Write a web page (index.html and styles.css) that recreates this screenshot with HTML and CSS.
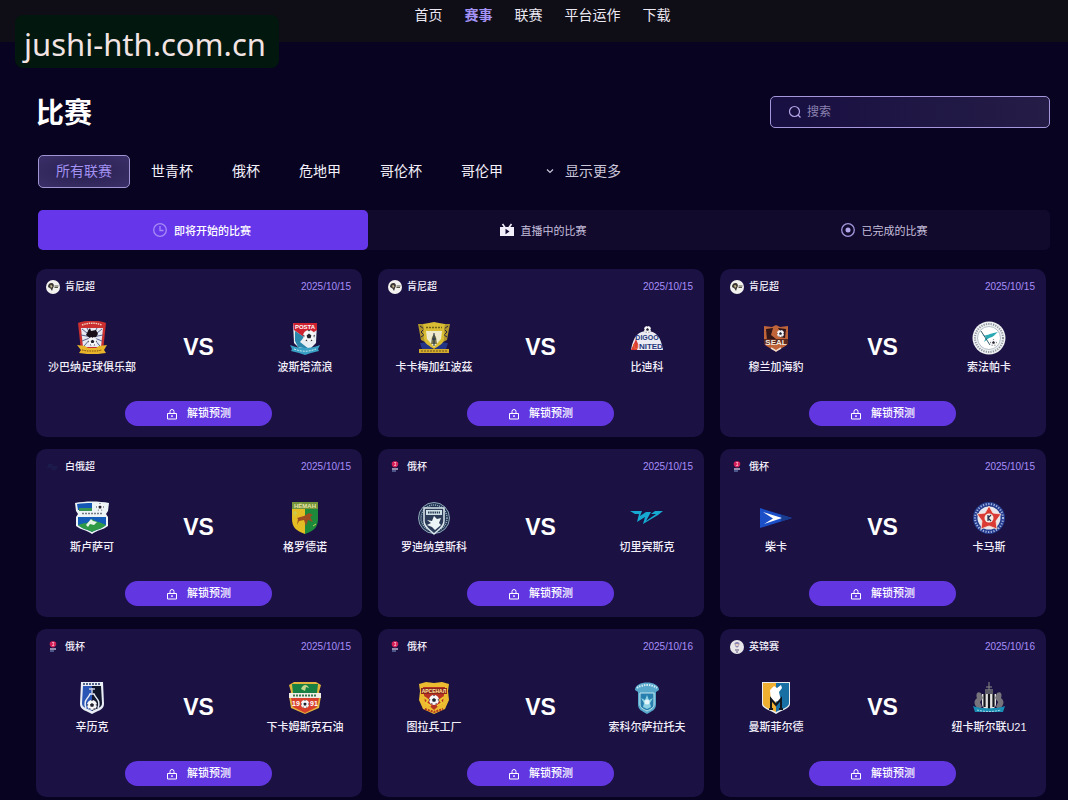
FILE: index.html
```html
<!DOCTYPE html>
<html lang="zh-CN">
<head>
    <meta charset="UTF-8">
    <meta name="viewport" content="width=device-width, initial-scale=1.0">
    <title>比赛</title>
    <link rel="stylesheet" href="styles.css">
</head>
<body>
    <!-- shared icons -->
    <svg class="sprite" aria-hidden="true">
        <symbol id="lock" viewBox="0 0 12 12">
            <path d="M1.500 5.500h9v5.500h-9zM4 5.500V3.500a2 2 0 0 1 4 0V5.500M6 7.500v1.500" fill="none" stroke="currentColor"/>
            <circle cx="6" cy="8" r="0.8" fill="currentColor"/>
        </symbol>
        <symbol id="ball" viewBox="0 0 10 10">
            <circle cx="5" cy="5" r="5" fill="#f6f6f8"/>
            <path d="M5 3l2 1.500-.7 2.300H3.700L3 4.500zM4 0h2L5 1.200zM0 4l1.300.6L.8 6.500zM10 4l-1.300.6.5 1.900zM2 8.800L3 8l.8 1.600zM8 8.800L7 8l-.8 1.600z" fill="#22222e"/>
        </symbol>
        <symbol id="kenya" viewBox="0 0 14 14">
            <circle cx="7" cy="7" r="7" fill="#f4f2ee"/>
            <path d="M2 7c0-3 2-4.500 4-4 2 .5 2.500 3 1 5L6 11 4.500 8.500z" fill="#3b3836"/>
            <path d="M4 5.500l1.500-.5 1 1.500-1.500 1.500z" fill="#c9b88a"/>
            <path d="M8.500 6h4M8.500 7.500h3.500" stroke="#554"/>
        </symbol>
        <symbol id="belarus" viewBox="0 0 14 14">
            <path d="M2 4h5l-1 2h6l-2 4H5l1-2H1z" fill="#1c1a4b"/>
        </symbol>
        <symbol id="russia" viewBox="0 0 14 14">
            <path d="M4 2.500C5 .8 9 .8 10 2.500S9.500 7.500 7 7.500 3 4.500 4 2.500z" fill="#d51f58"/>
            <path d="M6 2.500h2L7 4l1 1.500H6" stroke="#ffb4c8" fill="none" stroke-width="0.800"/>
            <path d="M4 9h6" stroke="#e9e3f3" stroke-width="1.200"/>
            <path d="M4 11h4" stroke="#7f9cd0"/>
        </symbol>
        <symbol id="england" viewBox="0 0 14 14">
            <circle cx="7" cy="7" r="7" fill="#e9e6ea"/>
            <path d="M4.500 3.500C5 1.500 9 1.500 9.500 3.500L9 6 7.500 7.500h-1L5 6z" fill="#8b86b4"/>
            <path d="M5.500 4h3v2h-3z" fill="#e8cfc0"/>
            <path d="M5 10h4M6 12h2" stroke="#5f577c"/>
        </symbol>
    </svg>

    <header class="header">
        <nav class="nav">
            <a href="#">首页</a>
            <a href="#" class="current">赛事</a>
            <a href="#">联赛</a>
            <a href="#">平台运作</a>
            <a href="#">下载</a>
        </nav>
    </header>
    <div class="site-badge">jushi-hth.com.cn</div>

    <main class="page">
        <div class="title-row">
            <h1>比赛</h1>
            <form class="search" role="search">
                <label for="search" aria-label="搜索">
                    <svg width="14" height="14" viewBox="0 0 14 14"><circle cx="6.500" cy="6.500" r="5" fill="none" stroke="currentColor" stroke-width="1.200"/><path d="M10 10l2.500 2.500" stroke="currentColor" stroke-width="1.200"/></svg>
                </label>
                <input type="search" id="search" placeholder="搜索">
            </form>
        </div>

        <div class="filters">
            <button type="button" class="filter active">所有联赛</button>
            <button type="button" class="filter">世青杯</button>
            <button type="button" class="filter">俄杯</button>
            <button type="button" class="filter">危地甲</button>
            <button type="button" class="filter">哥伦杯</button>
            <button type="button" class="filter">哥伦甲</button>
            <button type="button" class="filter more">
                <svg width="8" height="8" viewBox="0 0 8 8"><path d="M1 2.500l3 3 3-3" fill="none" stroke="currentColor" stroke-width="1.200"/></svg>
                显示更多
            </button>
        </div>

        <div class="tabs" role="tablist">
            <button type="button" class="tab active" role="tab" aria-selected="true">
                <svg width="14" height="14" viewBox="0 0 14 14"><circle cx="7" cy="7" r="6.300" fill="none" stroke="#a68bf6" stroke-width="1.300"/><path d="M7 3v4.500h3.500" fill="none" stroke="#a68bf6" stroke-width="1.300"/></svg>
                即将开始的比赛
            </button>
            <button type="button" class="tab" role="tab" aria-selected="false">
                <svg width="14" height="14" viewBox="0 0 14 14"><path d="M0 4h14v9H0z" fill="#f2effa"/><path d="M2.500 1l2.500 3.500M11.500 1L9 4.500" stroke="#f2effa" stroke-width="1.600"/><path d="M5.500 5.800l4 2.700-4 2.700z" fill="#130b33"/></svg>
                直播中的比赛
            </button>
            <button type="button" class="tab" role="tab" aria-selected="false">
                <svg width="14" height="14" viewBox="0 0 14 14"><circle cx="7" cy="7" r="6.300" fill="none" stroke="#a497dc" stroke-width="1.300"/><circle cx="7" cy="7" r="2.500" fill="#b3a6ea"/></svg>
                已完成的比赛
            </button>
        </div>

        <section class="matches">
            <article class="card">
                <div class="card-head">
                    <span class="league"><svg><use href="#kenya"/></svg>肯尼超</span>
                    <time datetime="2025-10-15">2025/10/15</time>
                </div>
                <div class="teams">
                    <div class="team">
                        <svg viewBox="0 0 34 34">
                            <path d="M3 2C10-1 24-1 31 2L28 30H6z" fill="#c9302f"/>
                            <path d="M6 7h22l-2 19H8z" fill="#e6e9f2"/>
                            <path d="M17 16L7 8M17 16L12 7M17 16L22 7M17 16L27 8M17 16L6 14M17 16L28 14M17 16L7 20M17 16L27 20M17 16L9 25M17 16L25 25" stroke="#59628c"/>
                            <path d="M7 4C14 1.500 20 1.500 27 4" stroke="#f3d0c0" stroke-dasharray="1.500 .8" fill="none" stroke-width="1.500"/>
                            <path d="M11 14l2-4 2-3 1 3 5-1 2 4-2 3-6 1z" fill="#180f18"/>
                            <use href="#ball" x="13" y="16" width="9" height="9"/>
                            <path d="M2 24l8 1 3 2h8l3-2 8-1-3 5 2 3-8 1H12l-8-1 2-3z" fill="#e8b42a"/>
                            <path d="M7 29l5 1h10l5-1" stroke="#7c4a12" fill="none" stroke-dasharray="1.500 1"/>
                        </svg>
                        <span>沙巴纳足球俱乐部</span>
                    </div>
                    <strong class="vs">VS</strong>
                    <div class="team">
                        <svg viewBox="0 0 34 34">
                            <path d="M5 2h24l-1 20-11 11L6 22z" fill="#e9eef2"/>
                            <path d="M5 2h24v7l-12 8L6 9z" fill="#cf2231"/>
                            <text x="17" y="8" class="crest-text" font-size="6" fill="#fff">POSTA</text>
                            <path d="M7 10l9 6-4 5 9 7-11-2-3-6z" fill="#2b86ac"/>
                            <use href="#ball" x="15" y="9" width="12" height="12"/>
                            <path d="M2 24c9 4 21 4 30 0l-2 4 1 2-8 2-6 2-6-2-8-2 1-2z" fill="#3a9fc4"/>
                            <path d="M6 28c8 3 14 3 22 0" stroke="#c4e9f0" stroke-dasharray="2 1" fill="none"/>
                        </svg>
                        <span>波斯塔流浪</span>
                    </div>
                </div>
                <button type="button" class="unlock"><svg><use href="#lock"/></svg><span>解锁预测</span></button>
            </article>

            <article class="card">
                <div class="card-head">
                    <span class="league"><svg><use href="#kenya"/></svg>肯尼超</span>
                    <time datetime="2025-10-15">2025/10/15</time>
                </div>
                <div class="teams">
                    <div class="team">
                        <svg viewBox="0 0 34 34">
                            <path d="M1 3h5l2 18-4-2zM33 3h-5l-2 18 4-2z" fill="#b0962a"/>
                            <path d="M3 5l4 3-3 3 3 3-3 2M31 5l-4 3 3 3-3 3 3 2" stroke="#2a233c" fill="none"/>
                            <path d="M3 22l8-1 5 7H5zM31 22l-8-1-5 7h11z" fill="#253585"/>
                            <path d="M6 3l6-1 5-1 5 1 6 1-1 15c0 5-6 7-10 10-4-3-10-5-10-10z" fill="#d8bd34"/>
                            <path d="M9 10h16l-1 8-7 8-7-8z" fill="#eeeacc"/>
                            <path d="M9 6.500h16" stroke="#71601a" stroke-width="1.500" stroke-dasharray="2 1"/>
                            <path d="M15 16l2-3 2 3 1 7h-6z" fill="#7b784e"/><path d="M17 12v13M15 18h4" stroke="#1c2c4a"/>
                            <path d="M2 28h30v4H2z" fill="#d1aa2e"/><path d="M4 30h26" stroke="#6f5417" stroke-dasharray="2 1"/>
                        </svg>
                        <span>卡卡梅加红波茲</span>
                    </div>
                    <strong class="vs">VS</strong>
                    <div class="team">
                        <svg viewBox="0 0 34 34">
                            <path d="M1 29C3 15 9 10 17 10s14 5 16 19z" fill="#ecebf3"/>
                            <use href="#ball" x="14" y="5" width="7" height="7"/>
                            <path d="M1 29l5-11 2 5-1 6z" fill="#dd3b35"/>
                            <text x="17" y="19" class="crest-text" font-size="7" fill="#26377c">DIGOO</text>
                            <text x="18" y="28" class="crest-text" font-size="8" fill="#26377c"><tspan fill="#e8632f">U</tspan>NITED</text>
                        </svg>
                        <span>比迪科</span>
                    </div>
                </div>
                <button type="button" class="unlock"><svg><use href="#lock"/></svg><span>解锁预测</span></button>
            </article>

            <article class="card">
                <div class="card-head">
                    <span class="league"><svg><use href="#kenya"/></svg>肯尼超</span>
                    <time datetime="2025-10-15">2025/10/15</time>
                </div>
                <div class="teams">
                    <div class="team">
                        <svg viewBox="0 0 34 34">
                            <path d="M5 5l8 1 4-2 4 2 8-1v16c0 5-7 5-12 10C12 26 5 26 5 21z" fill="#c0643a"/>
                            <path d="M7 8l7-1-2 7 5 4-9 1zM19 7l8 1-1 9-5-1 1-4z" fill="#301519"/>
                            <use href="#ball" x="18" y="9" width="7" height="7"/>
                            <path d="M5 18h24v5H5z" fill="#5e291f"/>
                            <text x="17" y="24" class="crest-text" font-size="8" fill="#f4e8df">SEAL</text>
                            <path d="M12 27l5 3 5-3" stroke="#f1dccd" fill="none" stroke-width="1.500"/>
                        </svg>
                        <span>穆兰加海豹</span>
                    </div>
                    <strong class="vs">VS</strong>
                    <div class="team">
                        <svg viewBox="0 0 34 34">
                            <circle cx="17" cy="17" r="16.500" fill="#eef0f2"/>
                            <circle cx="17" cy="17" r="14" fill="none" stroke="#8d949d" stroke-width="2" stroke-dasharray="1.200 1.200"/>
                            <circle cx="17" cy="17" r="11.500" fill="#fff" stroke="#93a5b0" stroke-width="0.700"/>
                            <path d="M9 14c5 2 9-2 17-3-3 2-4 5-9 6l-5 4 2-5z" fill="#2baab4"/>
                            <path d="M9 10l9 14" stroke="#315d6c"/>
                            <use href="#ball" x="18" y="18" width="7" height="7"/>
                        </svg>
                        <span>索法帕卡</span>
                    </div>
                </div>
                <button type="button" class="unlock"><svg><use href="#lock"/></svg><span>解锁预测</span></button>
            </article>

            <article class="card">
                <div class="card-head">
                    <span class="league"><svg><use href="#belarus"/></svg>白俄超</span>
                    <time datetime="2025-10-15">2025/10/15</time>
                </div>
                <div class="teams">
                    <div class="team">
                        <svg viewBox="0 0 34 34">
                            <path d="M0 2c10-2 24-2 34 0l-1 8-2 3 2 3v9c-5 4-11 4-16 8-5-4-11-4-16-8v-9l2-3-2-3z" fill="#eef3f5"/>
                            <path d="M2 3c5-1 10-1 15-1v7H3z" fill="#1557b5"/>
                            <path d="M4 7h13v3H4z" fill="#3a9650"/>
                            <use href="#ball" x="21" y="2" width="8" height="8"/>
                            <path d="M7 12.500h20" stroke="#777c86" stroke-width="1.500" stroke-dasharray="2 1"/>
                            <path d="M3 16h28v8c-4 4-9 4-14 7-5-3-10-3-14-7z" fill="#145db9"/>
                            <path d="M3 24c6-3 9 0 14-6 4 3 8 3 14 6-4 4-9 4-14 7-5-3-10-3-14-7z" fill="#2f9a45"/>
                            <path d="M11 24l5-6 2 2 4 1-3 3-4-1-2 3z" fill="#e9f4e8"/>
                        </svg>
                        <span>斯卢萨可</span>
                    </div>
                    <strong class="vs">VS</strong>
                    <div class="team">
                        <svg viewBox="0 0 34 34">
                            <path d="M4 1h13v32C8 30 4 26 4 18z" fill="#e3bd23"/>
                            <path d="M17 1h13v17c0 8-4 12-13 15z" fill="#1d8a3b"/>
                            <path d="M4 1h26v7H4z" fill="#73943b"/>
                            <text x="17" y="7" class="crest-text" font-size="6" fill="#e8e3a9">НЁМАН</text>
                            <path d="M9 17l7-2 5-3 4 2-3 2 3 5-5-2-2 6-2-6-5 1-2 4 1-6z" fill="#9d4b20"/>
                            <path d="M5 12h4M7 10v5M25 25l3-2" stroke="#c4cf5a"/>
                        </svg>
                        <span>格罗德诺</span>
                    </div>
                </div>
                <button type="button" class="unlock"><svg><use href="#lock"/></svg><span>解锁预测</span></button>
            </article>

            <article class="card">
                <div class="card-head">
                    <span class="league"><svg><use href="#russia"/></svg>俄杯</span>
                    <time datetime="2025-10-15">2025/10/15</time>
                </div>
                <div class="teams">
                    <div class="team">
                        <svg viewBox="0 0 34 34">
                            <circle cx="17" cy="17" r="15.500" fill="#223354" stroke="#8fa8b6"/>
                            <circle cx="17" cy="17" r="13" fill="none" stroke="#9db5c0" stroke-width="1.500" stroke-dasharray="1 1"/>
                            <path d="M7 7h20v13c0 6-5 8-10 13C12 28 7 26 7 20z" fill="#2c3c58" stroke="#dce8ed" stroke-width="1.500"/>
                            <path d="M9 9h16v5H9z" fill="#cfe0e7"/><path d="M11 11.500h12" stroke="#2a3b56" stroke-width="2" stroke-dasharray="1.500 .7"/>
                            <path d="M10 19l5 1 2-5 3 3 4-1-2 5 2 2-6 5-3-3-5-2 4-2z" fill="#edf4f6"/>
                        </svg>
                        <span>罗迪纳莫斯科</span>
                    </div>
                    <strong class="vs">VS</strong>
                    <div class="team">
                        <svg viewBox="0 0 34 34">
                            <path d="M0 10h12l-2 5 6-4h5l-5 9 10-7h-5l4-3h8l-5 4-15 9 2-7-8 5 2-8H5z" fill="#16aad2"/>
                        </svg>
                        <span>切里宾斯克</span>
                    </div>
                </div>
                <button type="button" class="unlock"><svg><use href="#lock"/></svg><span>解锁预测</span></button>
            </article>

            <article class="card">
                <div class="card-head">
                    <span class="league"><svg><use href="#russia"/></svg>俄杯</span>
                    <time datetime="2025-10-15">2025/10/15</time>
                </div>
                <div class="teams">
                    <div class="team">
                        <svg viewBox="0 0 34 34">
                            <path d="M1 7l32 10L1 27z" fill="#1b4fc8"/>
                            <path d="M22 13.500L33 17l-11 3.500z" fill="#183b8e"/>
                            <path d="M4 11l19 6-18 6 9-5.500z" fill="#fff"/>
                        </svg>
                        <span>柴卡</span>
                    </div>
                    <strong class="vs">VS</strong>
                    <div class="team">
                        <svg viewBox="0 0 34 34">
                            <circle cx="17" cy="17" r="16" fill="#263d8f"/>
                            <circle cx="17" cy="17" r="14" fill="none" stroke="#a7b8e4" stroke-width="2" stroke-dasharray="1.200 1.500"/>
                            <circle cx="17" cy="17" r="11.500" fill="#e8e6ed"/>
                            <path d="M17 5l4 7 8 1-5 7 1 8-8-3-8 3 1-8-5-7 8-1z" fill="#da3b35" stroke="#f5e9df" stroke-width="0.800"/>
                            <circle cx="17" cy="17" r="4.500" fill="#f4eee6"/>
                            <path d="M16 14v6M19 14l-3 3 3 3" stroke="#222b4f" fill="none" stroke-width="1.200"/>
                        </svg>
                        <span>卡马斯</span>
                    </div>
                </div>
                <button type="button" class="unlock"><svg><use href="#lock"/></svg><span>解锁预测</span></button>
            </article>

            <article class="card">
                <div class="card-head">
                    <span class="league"><svg><use href="#russia"/></svg>俄杯</span>
                    <time datetime="2025-10-15">2025/10/15</time>
                </div>
                <div class="teams">
                    <div class="team">
                        <svg viewBox="0 0 34 34">
                            <path d="M6 1h22l1 22c0 6-7 7-12 10C12 30 5 29 5 23z" fill="#e9edf6"/>
                            <path d="M8 5h9v25c-5-3-10-3-10-8z" fill="#2b55b4"/><path d="M17 5h9l1 17c0 5-5 5-10 8z" fill="#11162d"/>
                            <path d="M8 3h18" stroke="#243464" stroke-width="1.500" stroke-dasharray="2 1"/>
                            <path d="M14 8h6M17 7v5" stroke="#c4cbe1" stroke-width="1.500"/>
                            <path d="M11 27c-3-8 2-9 4-14h4c2 5 7 6 4 14" fill="none" stroke="#e9edf6" stroke-width="1.500"/>
                            <use href="#ball" x="12" y="19" width="10" height="10"/>
                        </svg>
                        <span>辛历克</span>
                    </div>
                    <strong class="vs">VS</strong>
                    <div class="team">
                        <svg viewBox="0 0 34 34">
                            <path d="M1 4l5-3h22l5 3-2 7 2 4-2 12-14 6-14-6-2-12 2-4z" fill="#e3b43d"/>
                            <path d="M4 3h26l-1 9H5z" fill="#168142"/>
                            <path d="M13 8c2-5 6-5 8-1l-3-1-1 4z" fill="#c5d78b"/>
                            <path d="M1 12h32v5H1z" fill="#f0eee4"/><path d="M5 14.500h24" stroke="#397852" stroke-width="2" stroke-dasharray="2 1"/>
                            <path d="M3 17h28l-2 9-12 6-12-6z" fill="#d8402c"/>
                            <text x="8" y="25" class="crest-text" font-size="7" fill="#fff">19</text>
                            <text x="26" y="25" class="crest-text" font-size="7" fill="#fff">91</text>
                            <use href="#ball" x="13" y="19" width="8" height="8"/>
                        </svg>
                        <span>下卡姆斯克石油</span>
                    </div>
                </div>
                <button type="button" class="unlock"><svg><use href="#lock"/></svg><span>解锁预测</span></button>
            </article>

            <article class="card">
                <div class="card-head">
                    <span class="league"><svg><use href="#russia"/></svg>俄杯</span>
                    <time datetime="2025-10-16">2025/10/16</time>
                </div>
                <div class="teams">
                    <div class="team">
                        <svg viewBox="0 0 34 34">
                            <path d="M2 3l7-2 8 1 8-1 7 2-1 7 1 9-4 9-11 5-11-5-4-9 1-9z" fill="#ecbb2f"/>
                            <path d="M6 6h22l-2 15-9 8-9-8z" fill="#b93324"/>
                            <path d="M4 7h26v6H4z" fill="#8d241e"/>
                            <text x="17" y="12" class="crest-text" font-size="5" fill="#ffe9a0">АРСЕНАЛ</text>
                            <path d="M7 16l4 3-2 3 5 3M27 16l-4 3 2 3-5 3" stroke="#f1c634" stroke-width="2" fill="none"/>
                            <use href="#ball" x="12" y="14" width="10" height="10"/>
                            <path d="M8 28l9 3 9-3" stroke="#b53620" stroke-width="2" stroke-dasharray="2 1" fill="none"/>
                        </svg>
                        <span>图拉兵工厂</span>
                    </div>
                    <strong class="vs">VS</strong>
                    <div class="team">
                        <svg viewBox="0 0 34 34">
                            <path d="M5 9c0-10 24-10 24 0l-3 2v12c0 6-4 7-9 10-5-3-9-4-9-10V11z" fill="#58a8cc"/>
                            <path d="M7 7c5-4 15-4 20 0" stroke="#d2ecf3" stroke-width="2" stroke-dasharray="1.500 1" fill="none"/>
                            <path d="M10 12h14v11c0 4-3 5-7 7-4-2-7-3-7-7z" fill="#277fae" stroke="#c2e6ef"/>
                            <path d="M11 17l4 2 2-5 2 5 4-2-3 5 1 4-4 2-4-2 1-4z" fill="#8ed3e4"/>
                            <circle cx="17" cy="21" r="2.500" fill="#e4f6fa"/>
                        </svg>
                        <span>索科尔萨拉托夫</span>
                    </div>
                </div>
                <button type="button" class="unlock"><svg><use href="#lock"/></svg><span>解锁预测</span></button>
            </article>

            <article class="card">
                <div class="card-head">
                    <span class="league"><svg><use href="#england"/></svg>英锦赛</span>
                    <time datetime="2025-10-16">2025/10/16</time>
                </div>
                <div class="teams">
                    <div class="team">
                        <svg viewBox="0 0 34 34">
                            <path d="M3 1h28v22c0 5-9 6-14 10C12 29 3 28 3 23z" fill="#e9edf0"/>
                            <path d="M4 2h13v29C12 28 4 27 4 22z" fill="#efaf31"/><path d="M17 2h13v20c0 5-8 6-13 9z" fill="#176fa3"/>
                            <path d="M11 9l4-4 3 2 4-3 1 3-3 4 2 9-10 1z" fill="#fff"/>
                            <path d="M10 28h4M20 28h4M12 27v-9l5 6 5-6v9" fill="none" stroke="#10151e" stroke-width="2"/>
                        </svg>
                        <span>曼斯菲尔德</span>
                    </div>
                    <strong class="vs">VS</strong>
                    <div class="team">
                        <svg viewBox="0 0 34 34">
                            <path d="M13 8h8v7h-8z" fill="#5c5b68"/><path d="M17 1v8M14 6h6" stroke="#8d8989"/>
                            <path d="M10 13h14v10c0 4-4 5-7 7-3-2-7-3-7-7z" fill="#e5e4e3"/>
                            <path d="M12.500 13v13M17 13v17M21.500 13v13" stroke="#15151d" stroke-width="2.200"/>
                            <path d="M9 12c-5-3-5 3-4 5-4 3-3 8 2 11l3-2-2-5 3-4zM25 12c5-3 5 3 4 5 4 3 3 8-2 11l-3-2 2-5-3-4z" fill="#77747b"/>
                            <path d="M1 25c7 3 25 3 32 0l-2 6H3z" fill="#198cb3"/><path d="M5 29c8 2 16 2 24 0" stroke="#a6d9e4" stroke-dasharray="2 1" fill="none"/>
                        </svg>
                        <span>纽卡斯尔联U21</span>
                    </div>
                </div>
                <button type="button" class="unlock"><svg><use href="#lock"/></svg><span>解锁预测</span></button>
            </article>
        </section>
    </main>
</body>
</html>
```
FILE: styles.css
```css
* {
    box-sizing: border-box;
}
body {
    margin: 0;
    font-family: "Liberation Sans", "Noto Sans CJK SC", sans-serif;
    font-size: 14px;
    line-height: 20px;
    color: #f2effa;
    background-color: #070320;
}
button, input {
    font-family: inherit;
}
button {
    border: none;
    cursor: pointer;
}
svg {
    display: block;
    flex: none;
}
.sprite {
    position: absolute;
    width: 0;
    height: 0;
}
.header {
    height: 42px;
    padding: 5px 0 0 17px;
    background-color: #0f0d16;
}
.nav {
    display: flex;
    justify-content: center;
    gap: 22px;
}
.nav a {
    color: #ebe8f2;
    text-decoration: none;
}
.nav .current {
    color: #a493f5;
    font-weight: bold;
}
/* floats over the header */
.site-badge {
    position: absolute;
    top: 15px;
    left: 15px;
    padding: 9px 13px 4px 9px;
    border-radius: 8px;
    background-color: #02170d;
    color: #f3e4e4;
    font-family: "Noto Sans", sans-serif;
    font-size: 31px;
    line-height: 40px;
}
.page {
    padding: 54px 18px 0 36px;
}
.title-row {
    display: flex;
    justify-content: space-between;
    height: 32px;
}
h1 {
    margin: 0;
    font-size: 28px;
    line-height: 36px;
    color: #fff;
}
.search {
    display: flex;
    align-items: center;
    gap: 5px;
    width: 280px;
    padding: 0 17px;
    border: 1px solid #a697dc;
    border-radius: 5px;
    background: linear-gradient(90deg, #180f42, #251d46);
    color: #b4a6e8;
}
.search input {
    flex: 1;
    min-width: 0;
    padding: 0;
    border: none;
    outline: none;
    background: none;
    color: #fff;
    font-size: 12px;
}
.search input::placeholder {
    color: #8b82b0;
}
.filters {
    display: flex;
    gap: 3px;
    margin: 27px 0 22px 2px;
}
.filter {
    height: 33px;
    padding: 0 17px 2px;
    border: 1px solid transparent;
    border-radius: 5px;
    background: none;
    color: #f4f1fa;
    font-size: 14px;
    line-height: 20px;
}
.filter.active {
    border-color: #a095d2;
    background: radial-gradient(#281f50, #3b3068);
    color: #a392f2;
}
.filter.more {
    display: flex;
    align-items: center;
    gap: 11px;
    margin-left: 4px;
    color: #cbc6da;
}
.tabs {
    display: grid;
    grid-template-columns: repeat(3, 1fr);
    gap: 11px;
    margin-left: 2px;
    border-radius: 5px;
    background-color: #110a2c;
}
.tab {
    display: flex;
    align-items: center;
    justify-content: center;
    gap: 7px;
    height: 40px;
    padding: 0 8px 1px 6px;
    border-radius: 5px;
    background: none;
    color: #c6bfdc;
    font-size: 11px;
}
.tab.active {
    background-color: #6636ea;
    color: #fff;
    font-weight: 500;
}
.matches {
    display: grid;
    grid-template-columns: repeat(3, 1fr);
    gap: 12px 16px;
    margin: 19px 4px 0 0;
}
.card {
    padding: 9px 11px 11px 10px;
    border-radius: 10px;
    background-color: #1b1143;
}
.card-head {
    display: flex;
    align-items: center;
    justify-content: space-between;
    height: 18px;
}
.league {
    display: flex;
    align-items: center;
    gap: 5px;
    font-size: 10px;
    font-weight: 500;
}
.league svg {
    width: 14px;
    height: 14px;
}
time {
    color: #a78ffa;
    font-size: 10px;
}
.teams {
    display: flex;
    align-items: center;
    justify-content: space-between;
    margin-top: 25px;
}
.team {
    display: flex;
    flex-direction: column;
    align-items: center;
    gap: 3px;
    width: 92px;
    font-size: 11px;
    font-weight: 500;
    line-height: 18px;
    white-space: nowrap;
}
.team svg {
    width: 34px;
    height: 34px;
}
.vs {
    padding-bottom: 4px;
    color: #fff;
    font-size: 23px;
    line-height: 24px;
}
.crest-text {
    font-weight: bold;
    text-anchor: middle;
}
.unlock {
    display: flex;
    align-items: center;
    justify-content: center;
    gap: 9px;
    width: 147px;
    height: 25px;
    margin: 25px auto 0;
    border-radius: 13px;
    background-color: #6237e2;
    color: #fff;
    font-size: 11px;
    font-weight: 500;
}
.unlock svg {
    width: 12px;
    height: 12px;
}
.unlock span {
    padding-bottom: 3px;
}
```
